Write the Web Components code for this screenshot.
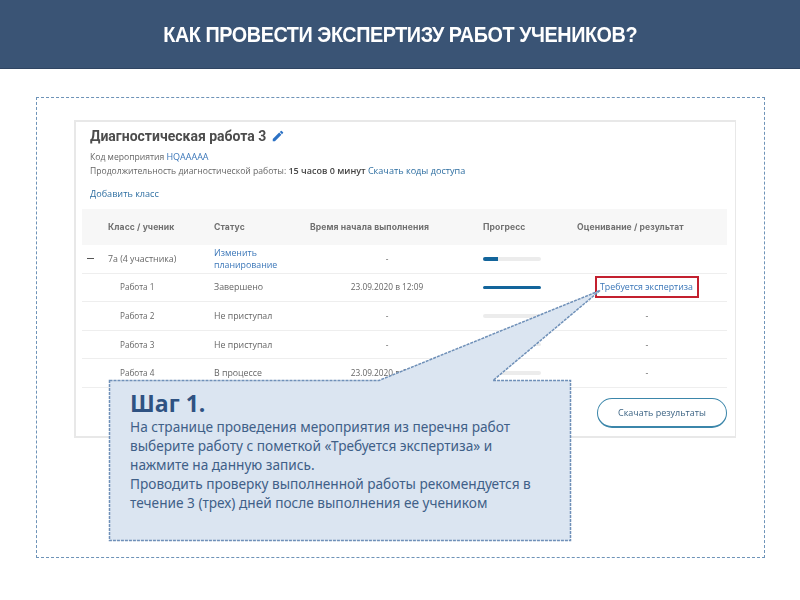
<!DOCTYPE html>
<html lang="ru">
<head>
<meta charset="utf-8">
<title>Экспертиза</title>
<style>
  html, body { margin: 0; padding: 0; background: #fff; }
  body { width: 800px; height: 600px; overflow: hidden; position: relative; font-family: "Open Sans", sans-serif; }
</style>
</head>
<body>
<slide-header>КАК ПРОВЕСТИ ЭКСПЕРТИЗУ РАБОТ УЧЕНИКОВ?</slide-header>
<slide-frame>
  <event-card>
    <result-row name="7а (4 участника)" level="class" status="Изменить планирование" time="-" progress="25"></result-row>
    <result-row name="Работа 1" status="Завершено" time="23.09.2020 в 12:09" progress="100" result="Требуется экспертиза"></result-row>
    <result-row name="Работа 2" status="Не приступал" time="-" progress="0" result="-"></result-row>
    <result-row name="Работа 3" status="Не приступал" time="-" progress="0" result="-"></result-row>
    <result-row name="Работа 4" status="В процессе" time="23.09.2020 в 12:09" progress="0" result="-"></result-row>
  </event-card>
</slide-frame>
<step-callout title="Шаг 1.">
  На странице проведения мероприятия из перечня работ<br>
  выберите работу с пометкой «Требуется экспертиза» и<br>
  нажмите на данную запись.<br>
  Проводить проверку выполненной работы рекомендуется в<br>
  течение 3 (трех) дней после выполнения ее учеником
</step-callout>

<script>
class SlideHeader extends HTMLElement {
    constructor() {
        super();
        this.attachShadow({ mode: 'open' });
        this.shadowRoot.innerHTML = `
            <style>
                :host {
                    display: flex;
                    align-items: center;
                    justify-content: center;
                    height: 69px;
                    padding-top: 2px;
                    background: #3a5475;
                    border-bottom: 1px solid #2f4562;
                    box-sizing: border-box;
                    color: #fff;
                    font: 700 22.5px "Liberation Sans", Arial, sans-serif;
                    letter-spacing: -0.5px;
                }
                span { display: block; white-space: nowrap; transform: scaleX(0.88); }
            </style>
            <span><slot></slot></span>
        `;
    }
}

class SlideFrame extends HTMLElement {
    constructor() {
        super();
        this.attachShadow({ mode: 'open' });
        this.shadowRoot.innerHTML = `
            <style>
                :host {
                    display: block;
                    box-sizing: border-box;
                    width: 729px;
                    height: 461px;
                    margin: 28px 0 0 36px;
                    padding: 22px 27px 0 37px;
                    border: 1px dashed #6e93b8;
                }
            </style>
            <slot></slot>
        `;
    }
}

class EventCard extends HTMLElement {
    constructor() {
        super();
        this.attachShadow({ mode: 'open' });
        this.shadowRoot.innerHTML = `
            <style>
                :host {
                    display: block;
                    box-sizing: border-box;
                    width: 662px;
                    height: 318px;
                    padding: 0 8px 0 6px;
                    border: 2px solid #e8e8e8;
                    border-right-width: 1px;
                    color: #666;
                    font-family: "Open Sans", sans-serif;
                    font-size: 8.6px;
                    filter: blur(0.3px);
                }
                .info { padding: 4px 0 0 8px; height: 87px; box-sizing: border-box; }
                h1 {
                    display: flex;
                    align-items: center;
                    gap: 5px;
                    margin: 0;
                    height: 20px;
                    font: 700 14px Roboto, sans-serif;
                    color: #4c4c4c;
                }
                svg { width: 14px; height: 14px; fill: #2b71c4; }
                p { margin: 0; line-height: 14px; white-space: nowrap; }
                .code { margin-top: 4px; }
                .add { margin-top: 9px; }
                a { color: #3a76b8; font-size: 9px; }
                .link { color: #2c6da0; font-size: 9.1px; }
                b { font-weight: 600; color: #444; font-size: 9px; }
                .head {
                    display: grid;
                    grid-template-columns: 132px 96px 173px 94px 1fr;
                    align-items: center;
                    height: 36px;
                    background: #f7f7f7;
                    font: 700 8.6px Inter, sans-serif;
                    color: #707070;
                    letter-spacing: 0.1px;
                }
                .head span:first-child { padding-left: 26px; }
                .foot { display: flex; justify-content: flex-end; padding-top: 10px; }
                button {
                    width: 130px;
                    height: 30px;
                    background: #fff;
                    border: 1px solid #3b86aa;
                    border-bottom-width: 2px;
                    border-radius: 15px;
                    color: #3d6484;
                    font: 9px "Open Sans", sans-serif;
                }
            </style>
            <div class="info">
                <h1>Диагностическая работа 3
                    <svg viewBox="0 0 24 24"><path d="M3 17.25V21h3.75L17.81 9.94l-3.75-3.75L3 17.25zM20.71 7.04a1 1 0 0 0 0-1.41l-2.34-2.34a1 1 0 0 0-1.41 0l-1.83 1.83 3.75 3.75 1.83-1.83z"/></svg>
                </h1>
                <p class="code">Код мероприятия <a>HQAAAAA</a></p>
                <p>Продолжительность диагностической работы: <b>15 часов 0 минут</b> <span class="link">Скачать коды доступа</span></p>
                <p class="add"><span class="link">Добавить класс</span></p>
            </div>
            <div class="head">
                <span>Класс / ученик</span><span>Статус</span><span>Время начала выполнения</span><span>Прогресс</span><span>Оценивание / результат</span>
            </div>
            <slot></slot>
            <div class="foot"><button>Скачать результаты</button></div>
        `;
    }
}

class ResultRow extends HTMLElement {
    constructor() {
        super();
        this.attachShadow({ mode: 'open' });
    }

    connectedCallback() {
        this.render();
    }

    render() {
        const name = this.getAttribute('name') || '';
        const status = this.getAttribute('status') || '';
        const time = this.getAttribute('time') || '';
        const progress = this.getAttribute('progress') || '0';
        const result = this.getAttribute('result') || '';
        const isClass = this.getAttribute('level') === 'class';
        const flagged = result === 'Требуется экспертиза';

        this.shadowRoot.innerHTML = `
            <style>
                :host {
                    display: grid;
                    grid-template-columns: 132px 96px 173px 94px 1fr;
                    align-items: center;
                    height: 28.6px;
                    box-sizing: border-box;
                    border-bottom: 1px solid #eee;
                    font: 8.8px/12px "Open Sans", sans-serif;
                    color: #666;
                }
                .name { display: flex; align-items: center; padding-left: ${isClass ? 5 : 38}px; ${isClass ? '' : 'font-size: 8.2px;'} }
                .minus { width: 7px; height: 1px; background: #555; margin-right: 14px; }
                .status { ${isClass ? 'color: #3a76b8; width: 76px;' : ''} }
                .time { text-align: center; padding-right: 19px; font-size: 8.3px; }
                .bar { width: 58px; height: 3.5px; border-radius: 2px; background: #ececec; overflow: hidden; }
                .fill { height: 100%; width: ${progress}%; background: #13659b; }
                .result { text-align: center; padding-right: 10px; }
                .flag { color: #3a76b8; outline: 2px solid #c3202f; padding: 3px 4px 3px 3px; }
            </style>
            <div class="name">${isClass ? '<i class="minus"></i>' : ''}${name}</div>
            <div class="status">${status}</div>
            <div class="time">${time}</div>
            <div class="bar"><div class="fill"></div></div>
            <div class="result">${flagged ? `<span class="flag">${result}</span>` : result}</div>
        `;
    }
}

class StepCallout extends HTMLElement {
    constructor() {
        super();
        this.attachShadow({ mode: 'open' });
    }

    connectedCallback() {
        const title = this.getAttribute('title') || '';
        this.shadowRoot.innerHTML = `
            <style>
                :host { display: block; position: absolute; left: 0; top: 0; width: 800px; height: 600px; pointer-events: none; }
                svg { position: absolute; left: 0; top: 0; }
                .text {
                    position: absolute;
                    left: 130px;
                    top: 389px;
                    color: #3f6088;
                    font: 13.65px/19px "Noto Sans", sans-serif;
                    white-space: nowrap;
                }
                h2 { margin: 0; font: 700 23px/28px "Open Sans", sans-serif; color: #2f5282; }
            </style>
            <svg width="800" height="600">
                <polygon points="109.5,380.5 379,380.5 600,290.5 493,380.5 570.5,380.5 570.5,540.5 109.5,540.5"
                    fill="#dbe5f1" stroke="#6f90b8" stroke-width="1.5" stroke-dasharray="3 1"/>
            </svg>
            <div class="text"><h2>${title}</h2><slot></slot></div>
        `;
    }
}

customElements.define('slide-header', SlideHeader);
customElements.define('slide-frame', SlideFrame);
customElements.define('event-card', EventCard);
customElements.define('result-row', ResultRow);
customElements.define('step-callout', StepCallout);
</script>
</body>
</html>
